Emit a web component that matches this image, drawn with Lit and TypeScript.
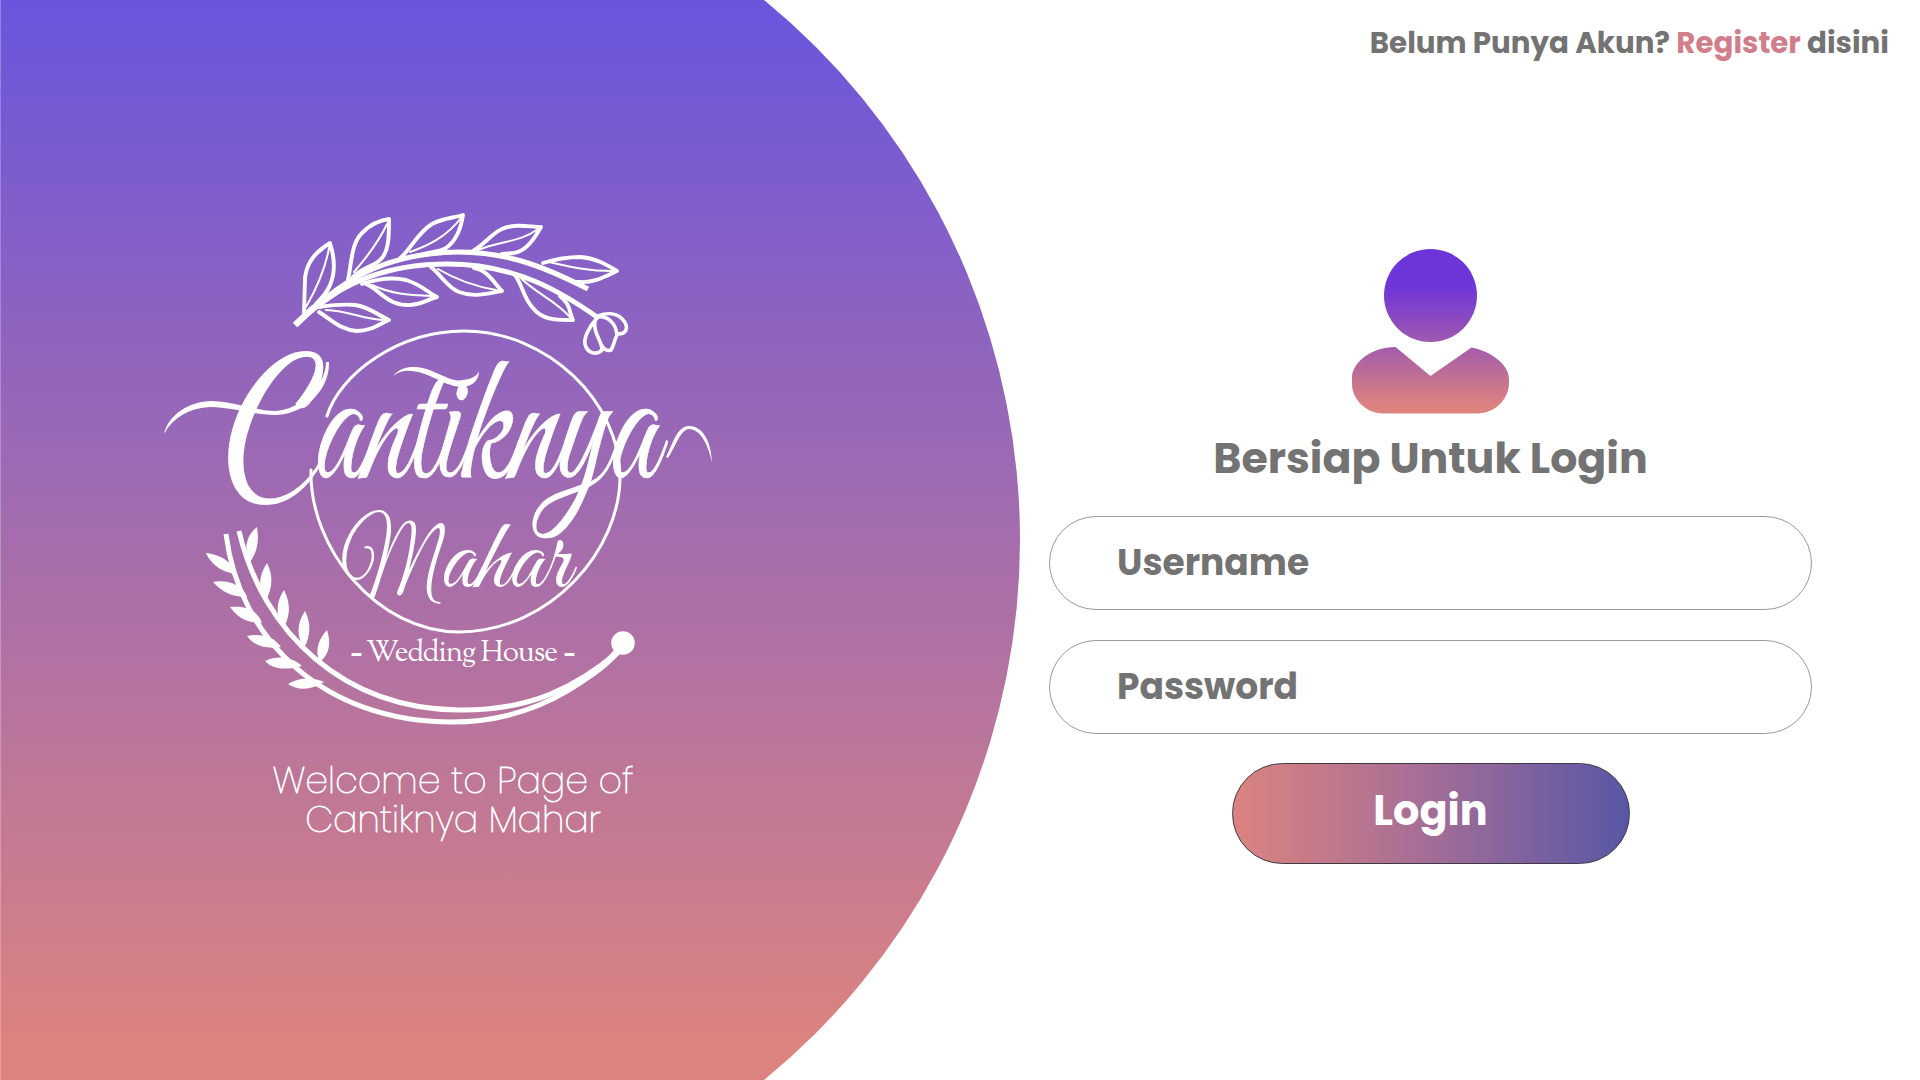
import { LitElement, html, css, svg } from "lit";
import { customElement } from "lit/decorators.js";

@customElement("brand-logo")
class BrandLogo extends LitElement {
  static styles = css`
    :host { display: block; width: 560px; height: 520px; }
    svg { display: block; width: 560px; height: 520px; overflow: visible; }
    .line { fill: none; stroke: #fff; stroke-linecap: round; stroke-linejoin: round; }
    .solid { fill: #fff; }
    .butt { stroke-linecap: butt; }
    .initial { fill: #fff; font-family: "Dancing Script", "Liberation Serif", cursive; }
    .script { fill: #fff; font-family: "Great Vibes", "Liberation Serif", cursive; }
    .heavy { stroke: #fff; stroke-width: 0.6; }
    .tag { fill: #fff; font-family: "Sorts Mill Goudy", "Liberation Serif", serif; font-size: 29.5px; }
    .dash { font-family: "Open Sans", sans-serif; font-size: 40px; }
  `;

  private topGarland() {
    const outlines = [
      "M304 313L305 278C307 261 316 252 330 243C336 262 334 276 330 285C327 293 322 298 316 304",
      "M348 280C352 261 351 243 363 232C372 223 382 220 389 219C389 236 389 251 381 259C374 267 364 266 353 277",
      "M400 258C409 252 417 233 432 224C443 218 454 218 463 215C461 228 456 241 446 248C438 253 429 251 418 256",
      "M473 251C485 244 491 234 502 229C515 223 530 227 541 227C534 239 528 248 518 252C513 254 508 253 502 254",
      "M543 263C556 259 566 257 580 257C596 258 607 265 617 271C604 277 594 283 580 282L576 282",
      "M319 307C333 305 344 304 355 305C370 307 379 316 389 320C379 324 371 331 357 331C341 330 333 321 319 312",
      "M362 284C377 279 393 277 406 280C422 285 427 292 437 297C426 300 419 306 406 305C386 304 379 289 366 284",
      "M431 267C443 277 447 287 459 292C475 298 488 293 502 291C494 283 488 270 474 268",
      "M514 274C522 283 523 297 532 307C543 321 557 320 573 320C569 312 571 305 560 296",
    ];
    const ribs = [
      "M306 307C318 286 326 265 329 248", "M354 272C367 257 380 239 387 224",
      "M410 252C430 245 447 236 461 218", "M478 250C500 241 521 242 538 229",
      "M549 262C575 268 590 271 612 271", "M326 310C350 311 362 319 383 320",
      "M372 285C392 294 407 295 432 296", "M438 269C455 279 472 286 496 290",
      "M519 276C533 292 554 299 570 317",
    ];
    return svg`
      ${outlines.map((d) => svg`<path class="line" stroke-width="3.9" d=${d} />`)}
      ${ribs.map((d) => svg`<path class="line" stroke-width="2" d=${d} />`)}
      <path class="line butt" stroke-width="5" d="M296 325C335 286 378 253 458 252C510 252 549 269 588 289" />
      <path class="line" stroke-width="5" d="M308 314C342 283 387 264 447 264C515 264 560 291 597 317" />
      <path class="line butt" stroke-width="6.4" d="M295 325L312 309L346 285" />
      <path class="line" stroke-width="3.6" d="M597 318C588 328 584 338 585 344C587 353 596 356 602 350C602 342 596 336 595 328C594 323 595 320 597 317C607 315 616 323 617 335C614 341 614 345 611 350C606 352 603 348 601 344" />
      <path class="line" stroke-width="3.6" d="M598 316C608 312 618 313 624 321C629 328 626 334 618 334" />`;
  }

  private bottomGarland() {
    const solids = [
      "M206 553C218 554 233 561 235 574C225 572 213 568 206 553Z",
      "M213 582C227 579 243 585 247 597C232 597 222 592 213 582Z",
      "M230 607C244 606 257 609 262 623C247 623 238 618 230 607Z",
      "M247 636C260 633 274 636 281 647C267 649 255 647 247 636Z",
      "M265 661C278 655 292 657 302 666C287 670 273 670 265 661Z",
      "M288 684C300 677 313 677 324 682C312 690 298 691 288 684Z",
      "M257 527C245 537 244 550 250 562C258 551 259 540 257 527Z",
      "M267 563C259 575 257 589 266 600C273 587 273 575 267 563Z",
      "M284 590C276 602 275 615 284 627C291 614 290 602 284 590Z",
      "M305 611C296 624 297 638 304 648C311 635 311 623 305 611Z",
      "M327 630C317 641 315 652 320 662C330 654 331 642 327 630Z",
    ];
    return svg`
      ${solids.map((d) => svg`<path class="solid" d=${d} />`)}
      <path class="line butt" stroke-width="5" d="M226 534C239 639 323 722 452 722C522 722 576 694 621 649" />
      <path class="line butt" stroke-width="5" d="M239 531C263 634 345 709 459 710C530 711 577 687 619 651" />
      <path class="solid" d="M567 689C587 677 601 665 614 650L620 654C603 672 588 681 568 692Z" />
      <circle class="solid" cx="623" cy="643" r="11.8" />`;
  }

  render() {
    return html`<svg viewBox="160 210 560 520">
      ${this.topGarland()}
      <path class="line" stroke-width="3" d="M311 470C309 548 377 632 459 632C553 631 620 548 620 477C620 402 548 331 464 331C398 331 340 374 327 416" />
      <path class="solid" d="M164 434C168 416 188 401 212 401C236 402 256 411 275 411C300 410 326 386 326 362L329 362C330 392 302 415 275 415C252 415 232 407 210 407C190 408 173 417 164 434Z" />
      <text class="initial" x="224" y="488" font-size="189">C</text>
      <text class="script heavy" x="314" y="477" font-size="190" textLength="344" lengthAdjust="spacingAndGlyphs">antiknya</text>
      <path class="solid" d="M393 376C403 364 419 366 432 371C444 376 453 382 463 380C472 379 477 376 479 371C479 379 474 386 463 387C451 387 441 381 430 376C418 371 403 367 393 376Z" />
      <path class="solid" d="M666 457C673 444 676 428 688 426C703 425 711 442 712 462C708 446 702 430 689 429C680 430 676 446 668 458Z" />
      <text class="script" x="341" y="592" font-size="100" textLength="95" lengthAdjust="spacingAndGlyphs">M</text>
      <text class="script" x="441" y="587" font-size="103" textLength="129" lengthAdjust="spacingAndGlyphs">ahar</text>
      <text class="tag"><tspan class="dash" x="350" y="665">-</tspan><tspan x="366" y="661" textLength="192">Wedding House</tspan><tspan class="dash" x="563" y="665">-</tspan></text>
      ${this.bottomGarland()}
    </svg>`;
  }
}

@customElement("user-avatar")
class UserAvatar extends LitElement {
  static styles = css`
    :host { display: block; width: 162px; height: 166px; }
    svg { display: block; }
  `;
  render() {
    return html`<svg width="160" height="166" viewBox="0 0 160 166">
      <defs>
        <linearGradient id="g" gradientUnits="userSpaceOnUse" x1="0" y1="0" x2="0" y2="166">
          <stop offset=".22" stop-color="#6d35d9" />
          <stop offset=".6" stop-color="#a65caa" />
          <stop offset=".94" stop-color="#dc837f" />
        </linearGradient>
      </defs>
      <circle cx="80.500" cy="46.500" r="46.500" fill="url(#g)" />
      <path fill="url(#g)" d="M45.500 98C22 98 2 113 2 129V135C2 150 16 164.500 33 164.500H127C146 164.500 159 149 159 134V130C159 115 140 102 121.500 98.500L80.500 127Z" />
    </svg>`;
  }
}

@customElement("app-root")
class AppRoot extends LitElement {
  static styles = css`
    :host { display: block; font-family: Poppins, Inter, sans-serif; color: #737373; }
    * { box-sizing: border-box; }
    .page { display: grid; grid-template-columns: 1020px 900px; width: 1920px; height: 1080px; background: #fff; overflow: hidden; }
    .brand { padding: 210px 0 0 159px; border-left: 1px solid rgba(255, 255, 255, 0.25); background: linear-gradient(180deg, #6a55dd 0, #dc837f 1050px) border-box; clip-path: circle(697.5px at 322.5px 540px); }
    .welcome { width: 586px; margin: 32px 0 0 0; text-align: center; color: #fff; font-weight: 200; font-size: 36.3px; line-height: 38.5px; -webkit-text-stroke: 0.8px #fff; }
    .side { display: flex; flex-direction: column; align-items: flex-start; padding: 20px 31px 0 29px; }
    .top { align-self: flex-end; margin: 0; height: 45px; line-height: 45px; font-size: 29.3px; font-weight: 700; white-space: nowrap; }
    .link { color: #d27d8a; text-decoration: none; }
    .form { width: 763px; margin: 184px 0 0; display: flex; flex-direction: column; align-items: center; }
    .title { margin: 13px 0 1px; height: 60px; line-height: 60px; font-size: 42.7px; font-weight: 700; white-space: nowrap; }
    .field { width: 763px; height: 94px; margin-top: 27px; padding: 0 67px 2px; border: 1px solid #9a9a98; border-radius: 48px; background: #fff; font: inherit; font-size: 36px; font-weight: 700; color: #737373; outline: none; }
    .field + .field { margin-top: 30px; }
    .field::placeholder { color: #737373; opacity: 1; }
    .btn { width: 398px; height: 101px; margin-top: 29px; padding: 0 0 7px; border: 1px solid #403a46; border-radius: 51px; background: linear-gradient(90deg, #dc837f, #a66e96 48%, #5757a5); color: #fff; font: inherit; font-size: 41.4px; font-weight: 700; }
  `;
  render() {
    return html`<main class="page">
      <section class="brand">
        <brand-logo></brand-logo>
        <p class="welcome">Welcome to Page of<br />Cantiknya Mahar</p>
      </section>
      <section class="side">
        <p class="top">Belum Punya Akun? <a class="link">Register</a> disini</p>
        <div class="form">
          <user-avatar></user-avatar>
          <h1 class="title">Bersiap Untuk Login</h1>
          <input class="field" placeholder="Username" />
          <input class="field" type="password" placeholder="Password" />
          <button class="btn">Login</button>
        </div>
      </section>
    </main>`;
  }
}
